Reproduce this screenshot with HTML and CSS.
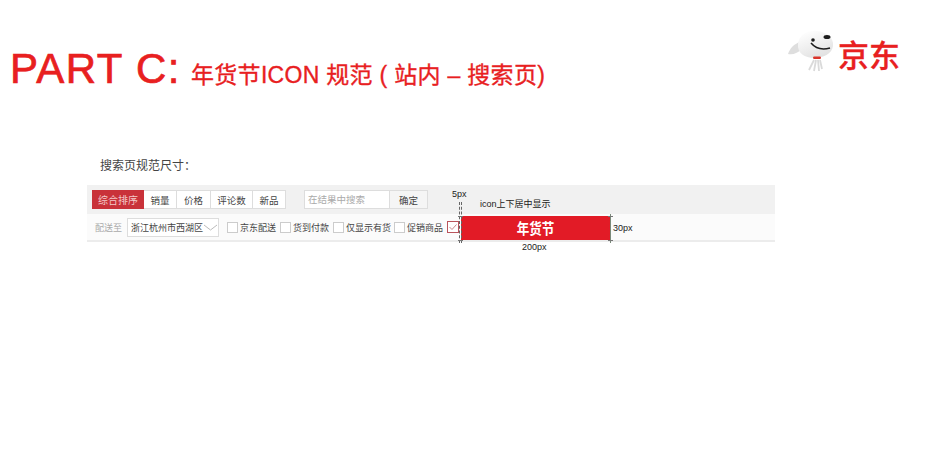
FILE: index.html
```html
<!DOCTYPE html>
<html lang="zh">
<head>
<meta charset="utf-8">
<title>PART C</title>
<link rel="stylesheet" href="styles.css">
</head>
<body>
<div class="page">
  <header class="head">
    <h1 class="title"><span class="part">PART C:</span><span class="sub">年货节ICON 规范 ( 站内 – 搜索页)</span></h1>
    <div class="logo">
      <svg class="dog" width="50" height="46" viewBox="0 0 50 46">
        <defs>
          <linearGradient id="fur" x1="0.2" y1="0" x2="0.7" y2="1">
            <stop offset="0" stop-color="#ffffff"/>
            <stop offset="1" stop-color="#e0e0e0"/>
          </linearGradient>
        </defs>
        <path d="M15 14 C9 16 5 20 3 26 C8 27 13 25 17 21 Z" fill="#dedede"/>
        <path d="M13 16 C14 7 22 2 32 3 C42 4 49 10 48 18 C47 26 38 30 29 30 C20 30 12 25 13 16 Z" fill="url(#fur)"/>
        <ellipse cx="42" cy="9" rx="3.500" ry="2" fill="#1c1c1c"/>
        <circle cx="28" cy="12" r="1.800" fill="#1c1c1c"/>
        <path d="M26 15 C31 21 38 22 45 20" fill="none" stroke="#1c1c1c" stroke-width="1.500"/>
        <path d="M29 32 L24 42 M31 32 L29 43 M33 32 L34 43 M35 32 L37 41" stroke="#dadada" stroke-width="1.800" fill="none"/>
        <rect x="28" y="28.500" width="8" height="2.500" rx="1.200" fill="#d9342b"/>
      </svg>
      <span class="brand">京东</span>
    </div>
  </header>

  <section class="spec">
    <p class="label">搜索页规范尺寸：</p>
    <div class="toolbar">
      <div class="sorts">
        <div class="tabs">
          <span class="tab tab-on">综合排序</span>
          <span class="tab tab-sales">销量</span>
          <span class="tab tab-price">价格</span>
          <span class="tab tab-rev">评论数</span>
          <span class="tab tab-new">新品</span>
        </div>
        <div class="search">
          <span class="field">在结果中搜索</span>
          <span class="ok">确定</span>
        </div>
      </div>
      <div class="filters">
        <span class="ship">配送至</span>
        <span class="area">浙江杭州市西湖区
          <svg class="chev" width="15" height="7" viewBox="0 0 15 7"><path d="M1 1 L7.500 6 L14 1" fill="none" stroke="#bbb"/></svg>
        </span>
        <span class="check c1"><i class="box"></i>京东配送</span>
        <span class="check c2"><i class="box"></i>货到付款</span>
        <span class="check c3"><i class="box"></i>仅显示有货</span>
        <span class="check c4"><i class="box"></i>促销商品</span>
        <svg class="tick" width="12" height="12" viewBox="0 0 12 12"><rect x=".5" y=".5" width="11" height="11" fill="#fff" stroke="#b9545c"/><path d="M2.500 6 L5 8.500 L9.500 3.500" fill="none" stroke="#c78a8e"/></svg>
        <div class="banner"><span class="banner-text">年货节</span></div>
      </div>

      <span class="note n-5">5px</span>
      <span class="note n-title">icon上下居中显示</span>
      <span class="note n-30">30px</span>
      <span class="note n-200">200px</span>
      <i class="guide g1"></i><i class="guide g2"></i><i class="guide g3"></i>
      <i class="tickmark t1"></i><i class="tickmark t2"></i>
      <i class="tickmark t3"></i><i class="tickmark t4"></i>
    </div>
  </section>
</div>
</body>
</html>
```

FILE: styles.css
```css
* { box-sizing: border-box; }
html, body { margin: 0; background: #fff; }
body { width: 950px; height: 453px; overflow: hidden; font-family: "Liberation Sans", "Noto Sans CJK SC", sans-serif; }
.page { padding: 0; }

.head { display: flex; justify-content: space-between; align-items: flex-start; height: 158px; padding: 39px 50px 0 10px; }
.title { margin: 8px 0 0; font-weight: 400; color: #e8201f; display: flex; align-items: baseline; line-height: 44px; }
.part { font-size: 42px; letter-spacing: 1.400px; width: 181px; white-space: nowrap; -webkit-text-stroke: .7px #e8201f; }
.sub { font-size: 23px; letter-spacing: .3px; white-space: nowrap; -webkit-text-stroke: .35px #e8201f; }
.logo { display: flex; align-items: flex-start; margin-top: -11px; }
.dog { flex: none; }
.brand { font-size: 31px; line-height: 34px; font-weight: 500; color: #e8201f; margin: 9px 0 0 3px; font-family: "Noto Sans CJK SC", sans-serif; -webkit-text-stroke: .3px #e8201f; }

.spec { padding-left: 87px; }
.label { margin: 0 0 11px 13px; font-size: 12px; line-height: 16px; color: #444; }

.toolbar { position: relative; width: 688px; height: 57px; font-size: 9.500px; color: #444; }
.sorts { height: 29px; background: #f1f1f1; display: flex; align-items: flex-start; padding: 5px 0 0 5px; }
.tabs { display: flex; height: 19px; }
.tab { display: flex; align-items: center; justify-content: center; height: 19px; background: #fff; border: 1px solid #ddd; border-left: 0; }
.tab-on { width: 52px; background: #c9323a; border: 0; color: #f3c9c9; font-size: 10px; }
.tab-sales { width: 33px; }
.tab-price { width: 34px; }
.tab-rev { width: 42px; }
.tab-new { width: 33px; }
.search { display: flex; height: 19px; margin-left: 18px; }
.field { width: 86px; background: #fff; border: 1px solid #ddd; color: #aaa; padding: 3px 0 0 3px; line-height: 12px; }
.ok { width: 38px; background: #f5f5f5; border: 1px solid #ddd; border-left: 0; display: flex; align-items: center; justify-content: center; }

.filters { height: 28px; background: #fbfbfb; border-bottom: 2px solid #ececec; display: flex; align-items: center; padding-left: 8px; position: relative; font-size: 9px; }
.ship { color: #aaa; width: 32px; }
.area { width: 92px; height: 19px; background: #fff; border: 1px solid #ddd; display: flex; align-items: center; justify-content: space-between; padding: 0 1px 0 3px; color: #444; margin-right: 8px; white-space: nowrap; }
.chev { flex: none; }
.check { display: flex; align-items: center; white-space: nowrap; }
.box { width: 11px; height: 11px; background: #fff; border: 1px solid #ccc; margin-right: 2px; flex: none; }
.c1 { width: 53px; }
.c2 { width: 53px; }
.c3 { width: 61px; }
.c4 { width: 53px; }
.tick { flex: none; }
.banner { width: 149px; height: 24px; margin: 1px 0 0 2px; background: #e21b26; color: #fff; font-size: 12.500px; font-weight: 700; line-height: 24px; text-align: center; font-family: "Noto Sans CJK SC", sans-serif; }
.banner-text { display: inline-block; transform: scaleY(1.150); }

.note { position: absolute; font-size: 9px; line-height: 11px; color: #222; white-space: nowrap; }
.n-5 { left: 365px; top: 4px; }
.n-title { left: 393px; top: 14px; }
.n-30 { left: 526px; top: 38px; }
.n-200 { left: 435px; top: 57px; }
.guide { position: absolute; width: 0; border-left: 1px dashed #666; top: 17px; height: 41px; }
.g1 { left: 372px; }
.g2 { left: 374px; }
.g3 { left: 523px; top: 29px; height: 29px; border-left: 1px solid #7a8a7a; }
.tickmark { position: absolute; height: 1px; width: 5px; background: #777; }
.t1 { left: 371px; top: 31px; }
.t2 { left: 371px; top: 55px; }
.t3 { left: 521px; top: 31px; }
.t4 { left: 521px; top: 55px; }
```
